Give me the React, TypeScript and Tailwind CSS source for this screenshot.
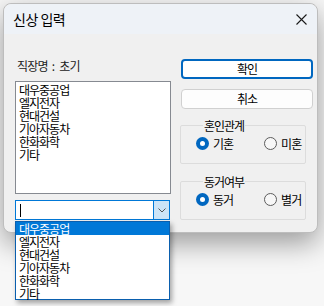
import React from "react";

const companies = ["대우중공업", "엘지전자", "현대건설", "기아자동차", "한화화학", "기타"];

const Radio = ({ label, checked }: { label: string; checked?: boolean }) => (
  <div className="flex items-center gap-[3px]">
    {checked ? (
      <span className="w-[13px] h-[13px] rounded-full bg-[#0067c0] flex items-center justify-center">
        <span className="w-[5px] h-[5px] rounded-full bg-white" />
      </span>
    ) : (
      <span className="w-[13px] h-[13px] rounded-full border border-[#5c5c5c] bg-[#f7f7f7]" />
    )}
    <span className="ml-[1px] text-[12px] tracking-[-1px] leading-[13px] text-black">{label}</span>
  </div>
);

const GroupBox = ({
  title,
  options,
  className = "",
}: {
  title: string;
  options: string[];
  className?: string;
}) => (
  <fieldset className={`border border-[#dcdcdc] rounded-[2px] pl-[15px] ${className}`}>
    <legend className="ml-[7px] px-[1px] text-[12px] tracking-[-1px] leading-[13px] text-black">{title}</legend>
    <div className="flex gap-[31px] pt-[5px]">
      <Radio label={options[0]} checked />
      <Radio label={options[1]} />
    </div>
  </fieldset>
);

export default function App() {
  return (
    <div className="w-[324px] h-[306px] bg-[#f7f7f7] relative overflow-hidden font-['Noto_Sans_CJK_KR','Noto_Sans',sans-serif]">
      <div className="ml-[3px] mt-[3px] w-[315px] h-[230px] rounded-[8px] border border-[#bdbdbd] bg-[#f0f0f0] shadow-[0_10px_28px_rgba(0,0,0,0.38)] flex flex-col">
        {/* title bar */}
        <div className="h-[30px] bg-[#eef2f7] rounded-t-[8px] flex items-center justify-between pl-[9px] pr-[9px]">
          <span className="text-[14px] tracking-[-0.5px] text-black">신상 입력</span>
          <svg width="11" height="11" viewBox="0 0 11 11" className="mr-[1px]">
            <path d="M0.5 0.5L10.5 10.5M10.5 0.5L0.5 10.5" stroke="#1a1a1a" strokeWidth="1.1" />
          </svg>
        </div>

        {/* body */}
        <div className="flex flex-1">
          <div className="ml-[11px] w-[156px] flex flex-col">
            <div className="mt-[24px] ml-[2px] flex items-center gap-[4px] text-[12px] leading-[16px] tracking-[-0.8px] text-[#222]">
              <span>직장명</span>
              <span>:</span>
              <span className="ml-[1px]">초기</span>
            </div>
            <div className="mt-[7px] h-[113px] border border-[#868a91] bg-white pl-[3px] pt-[1px]">
              {companies.map((c) => (
                <div key={c} className="text-[12px] tracking-[-1px] leading-[13px] text-black">
                  {c}
                </div>
              ))}
            </div>
            <div className="mt-[6px] h-[20px] w-[155px] border border-[#0078d7] bg-white flex">
              <div className="flex-1 flex items-center pl-[4px]">
                <span className="w-[1px] h-[13px] bg-black" />
              </div>
              <div className="w-[16px] bg-[#cce4f7] border-l border-[#0078d7] flex items-center justify-center">
                <svg width="8" height="5" viewBox="0 0 8 5">
                  <path d="M0.5 0.5L4 4L7.5 0.5" stroke="#555" strokeWidth="1" fill="none" />
                </svg>
              </div>
            </div>
          </div>

          <div className="ml-[10px] w-[132px] flex flex-col">
            <button className="mt-[25px] h-[20px] rounded-[4px] border-2 border-[#0067c0] bg-white text-[12px] tracking-[-1px] text-black leading-none">
              확인
            </button>
            <button className="mt-[10px] h-[20px] rounded-[4px] border border-[#d0d0d0] bg-[#fdfdfd] text-[12px] tracking-[-1px] text-black leading-none">
              취소
            </button>
            <GroupBox title="혼인관계" options={["기혼", "미혼"]} className="mt-[10px] w-[126px] h-[45px] ml-[-1px]" />
            <GroupBox title="동거여부" options={["동거", "별거"]} className="mt-[11px] w-[126px] h-[45px] ml-[-1px]" />
          </div>
        </div>
      </div>

      {/* open dropdown list */}
      <div className="absolute left-[15px] top-[221px] w-[155px] h-[79px] border border-[#0a5fae] bg-white shadow-[2px_3px_5px_rgba(0,0,0,0.35)]">
        {companies.map((c, i) => (
          <div
            key={c}
            className={`pl-[3px] text-[12px] tracking-[-1px] leading-[13px] ${i === 0 ? "bg-[#0078d7] text-white" : "text-black"}`}
          >
            {c}
          </div>
        ))}
      </div>
    </div>
  );
}
